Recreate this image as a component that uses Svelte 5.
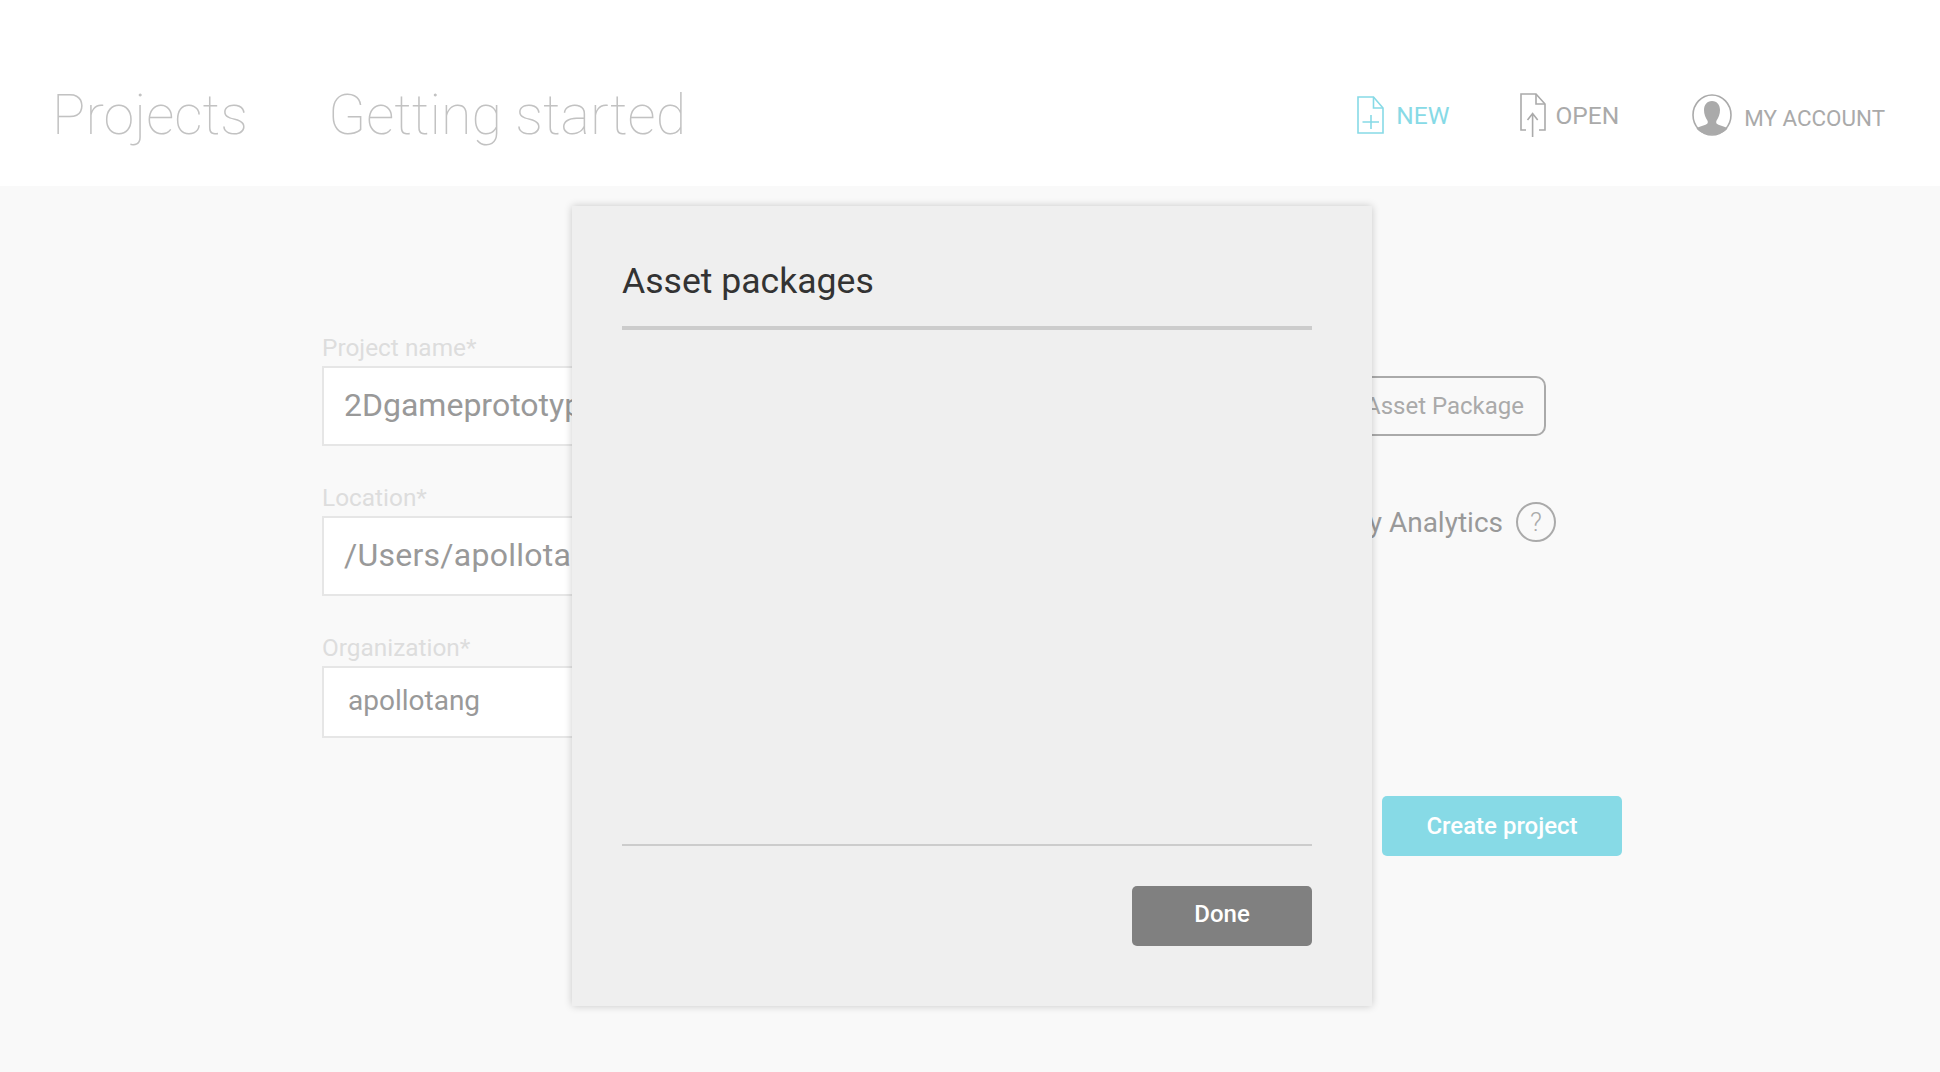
<script>
  const fields = [
    { label: 'Project name*', value: '2Dgameprototype', cls: '' },
    { label: 'Location*', value: '/Users/apollotang/Documents', cls: 'loc' },
    { label: 'Organization*', value: 'apollotang', cls: 'small' }
  ];
</script>

<div class="page">
  <header class="topbar">
    <nav class="tabs">
      <span>Projects</span>
      <span>Getting started</span>
    </nav>
    <div class="actions">
      <button class="action new">
        <svg width="27" height="38" viewBox="0 0 27 38" fill="none" stroke="currentColor" stroke-width="1.6">
          <path d="M1 1h15.500L26 12V37H1z" />
          <path d="M16.500 1v11H26" />
          <path d="M5.500 26h16.500M14 19v14" />
        </svg>
        NEW
      </button>
      <button class="action open">
        <svg width="26" height="44" viewBox="0 0 26 44" fill="none" stroke="#aaa" stroke-width="1.6">
          <path d="M6 37H1V1h15L25 11V37H19" />
          <path d="M16 1v10h9" />
          <path d="M12.600 44V20.500M7.500 27l5.100-6.500 5.100 6.500" />
        </svg>
        OPEN
      </button>
      <button class="action account">
        <svg width="40" height="42" viewBox="0 0 40 42">
          <ellipse cx="20" cy="21" rx="19" ry="20" fill="#fff" stroke="#aaa" stroke-width="1.600" />
          <path fill="#aaa" d="M20 7c-5.200 0-8 4-8 9 0 4 1.500 8 3.400 10.500.7 1 .5 3-.6 3.600C11.500 32 6.500 33 4.500 34.500 8 38.500 13.700 40.800 20 40.800s12-2.300 15.500-6.300c-2-1.500-7-2.500-10.300-4.400-1.100-.6-1.300-2.600-.6-3.600C26.500 24 28 20 28 16c0-5-2.800-9-8-9z" />
        </svg>
        <span>MY ACCOUNT</span>
      </button>
    </div>
  </header>

  <main class="content">
    <form class="form">
      <div class="col-left">
        {#each fields as field}
          <div class="field">
            <label for={field.label}>{field.label}</label>
            <input id={field.label} class={field.cls} value={field.value} readonly />
          </div>
        {/each}
      </div>
      <div class="col-right">
        <button type="button" class="outline">Add Asset Package</button>
        <div class="analytics">
          <span>Enable Unity Analytics</span>
          <span class="help">?</span>
        </div>
      </div>
      <button type="button" class="create">Create project</button>
    </form>
  </main>

  <section class="modal">
    <h2>Asset packages</h2>
    <div class="list"></div>
    <div class="modal-foot">
      <button class="done">Done</button>
    </div>
  </section>
</div>

<style>
  :global(body) {
    margin: 0;
    font-family: Roboto, "Liberation Sans", sans-serif;
  }

  .page {
    position: relative;
    height: 1072px;
    overflow: hidden;
    background: #f9f9f9;
  }

  button {
    font-family: inherit;
    cursor: pointer;
  }

  .topbar {
    height: 186px;
    box-sizing: border-box;
    padding: 0 55px 0 52px;
    background: #fff;
    display: flex;
    align-items: center;
    justify-content: space-between;
  }

  .tabs {
    display: flex;
    gap: 80px;
    margin-top: 43px;
    font-size: 55.700px;
    font-weight: 100;
    color: #c2c2c2;
  }

  .actions {
    display: flex;
    align-items: center;
    margin-top: 44px;
  }

  .action {
    display: flex;
    align-items: center;
    padding: 0;
    border: none;
    background: none;
    font-size: 24.500px;
    color: #aaa;
  }

  .new {
    gap: 12px;
    color: #87dae6;
    margin-right: 71px;
  }

  .open {
    gap: 9px;
    margin-right: 73px;
  }

  .account {
    gap: 12px;
    font-size: 22.400px;
  }

  .account span {
    margin-top: 6px;
  }

  .content {
    padding: 145px 0 0 322px;
  }

  .form {
    position: relative;
    width: 1300px;
    display: grid;
    grid-template-columns: 640px 1fr;
  }

  .col-left {
    display: flex;
    flex-direction: column;
    gap: 35px;
  }

  .field {
    display: flex;
    flex-direction: column;
    gap: 1px;
  }

  label {
    font-size: 24.400px;
    line-height: 34px;
    color: #ddd;
  }

  input {
    width: 600px;
    height: 80px;
    box-sizing: border-box;
    padding: 0 20px 2px;
    border: 2px solid #e6e6e6;
    background: #fff;
    font-family: inherit;
    font-size: 32px;
    color: #999;
    outline: none;
  }

  input.loc {
    letter-spacing: 0.25px;
  }

  input.small {
    height: 72px;
    padding: 0 24px 3px;
    font-size: 28px;
  }

  .col-right {
    padding-top: 45px;
    display: flex;
    flex-direction: column;
    align-items: flex-end;
    margin-right: 76px;
  }

  .outline {
    height: 60px;
    padding: 0 20px;
    border: 2px solid #aaa;
    border-radius: 10px;
    background: none;
    font-size: 24px;
    color: #aaa;
  }

  .analytics {
    display: flex;
    align-items: center;
    gap: 13px;
    margin-top: 66px;
    margin-right: -10px;
    font-size: 28px;
    color: #999;
  }

  .help {
    width: 40px;
    height: 40px;
    box-sizing: border-box;
    border: 2px solid #aaa;
    border-radius: 50%;
    display: flex;
    align-items: center;
    justify-content: center;
    font-size: 26px;
    font-weight: 300;
    color: #aaa;
  }

  .create {
    grid-column: 2;
    justify-self: end;
    margin-top: 58px;
    width: 240px;
    height: 60px;
    border: none;
    border-radius: 5px;
    background: #87dae6;
    color: #fff;
    font-size: 24px;
    font-weight: 500;
  }

  .modal {
    position: absolute;
    left: 572px;
    top: 206px;
    width: 800px;
    height: 800px;
    box-sizing: border-box;
    padding: 0 60px 60px 50px;
    background: #efefef;
    box-shadow: 0 0 8px rgba(0, 0, 0, 0.2);
    display: flex;
    flex-direction: column;
  }

  h2 {
    margin: 0;
    height: 124px;
    box-sizing: border-box;
    padding-top: 53px;
    border-bottom: 4px solid #ccc;
    font-size: 35.600px;
    line-height: 44px;
    font-weight: 400;
    color: #333;
  }

  .list {
    flex: 1;
    border-bottom: 2px solid #ccc;
  }

  .modal-foot {
    display: flex;
    justify-content: flex-end;
    margin-top: 40px;
  }

  .done {
    width: 180px;
    height: 60px;
    border: none;
    border-radius: 5px;
    background: #808080;
    color: #fff;
    font-size: 24px;
    font-weight: 500;
    padding-bottom: 6px;
  }
</style>
